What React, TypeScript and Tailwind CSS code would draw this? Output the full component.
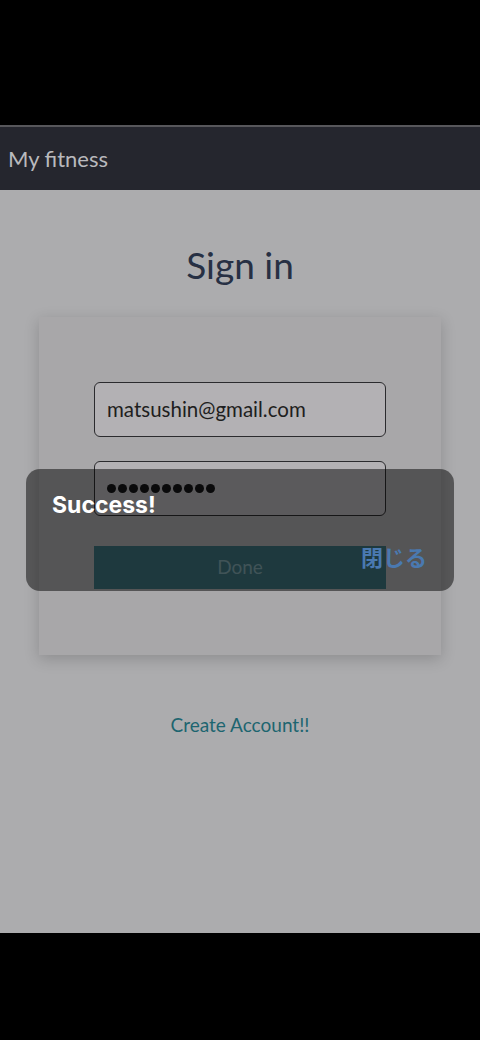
export default function App() {
  const dots = Array.from({ length: 10 });
  return (
    <div className="relative w-[480px] h-[1040px] bg-black flex flex-col" style={{ fontFamily: "Lato, 'Noto Sans', sans-serif" }}>
      <div className="h-[125px] bg-black" />
      <div className="h-[2px] bg-[#57575b]" />
      <header className="h-[63px] bg-[#25262e] flex items-center px-2">
        <span className="text-[22px] text-[#b9b9bd]">My fitness</span>
      </header>
      <main className="h-[743px] bg-[#acacae] flex flex-col items-center">
        <h1 className="mt-[56px] text-[37px] leading-none text-[#273044]">Sign in</h1>
        <div className="mt-[34px] w-[402px] h-[338px] bg-[#a8a7a9] shadow-[0_4px_14px_rgba(0,0,0,0.18)] flex flex-col items-center pt-[65px]">
          <div className="w-[292px] h-[55px] rounded-[6px] border border-[#2b2b2e] bg-[#b3b1b4] flex items-center px-3 text-[20.5px] text-[#1e1e20]">
            matsushin@gmail.com
          </div>
          <div className="mt-[24px] w-[292px] h-[55px] rounded-[6px] border border-[#2b2b2e] bg-[#b3b1b4] flex items-center gap-[2px] px-3">
            {dots.map((_, i) => (
              <span key={i} className="w-[9px] h-[9px] rounded-full bg-[#141416]" />
            ))}
          </div>
          <div className="mt-[30px] w-[292px] h-[43px] bg-[#3c717b] flex items-center justify-center text-[19px] text-[#7fa4ab]">
            Done
          </div>
        </div>
        <a className="mt-[56px] text-[19px] text-[#1d6570]">Create Account!!</a>
      </main>
      <div className="flex-1 bg-black" />

      <div className="absolute left-[26px] top-[469px] w-[428px] h-[122px] rounded-[14px] bg-[rgba(0,0,0,0.49)]">
        <div className="absolute left-[26px] top-[19px] text-[23px] font-bold text-white" style={{ fontFamily: "Inter, 'Liberation Sans', sans-serif" }}>
          Success!
        </div>
        <div className="absolute right-[27px] top-[71px] text-[22px] font-semibold text-[#4a79b0]" style={{ fontFamily: "'Noto Sans CJK JP', sans-serif" }}>
          閉じる
        </div>
      </div>
    </div>
  );
}
